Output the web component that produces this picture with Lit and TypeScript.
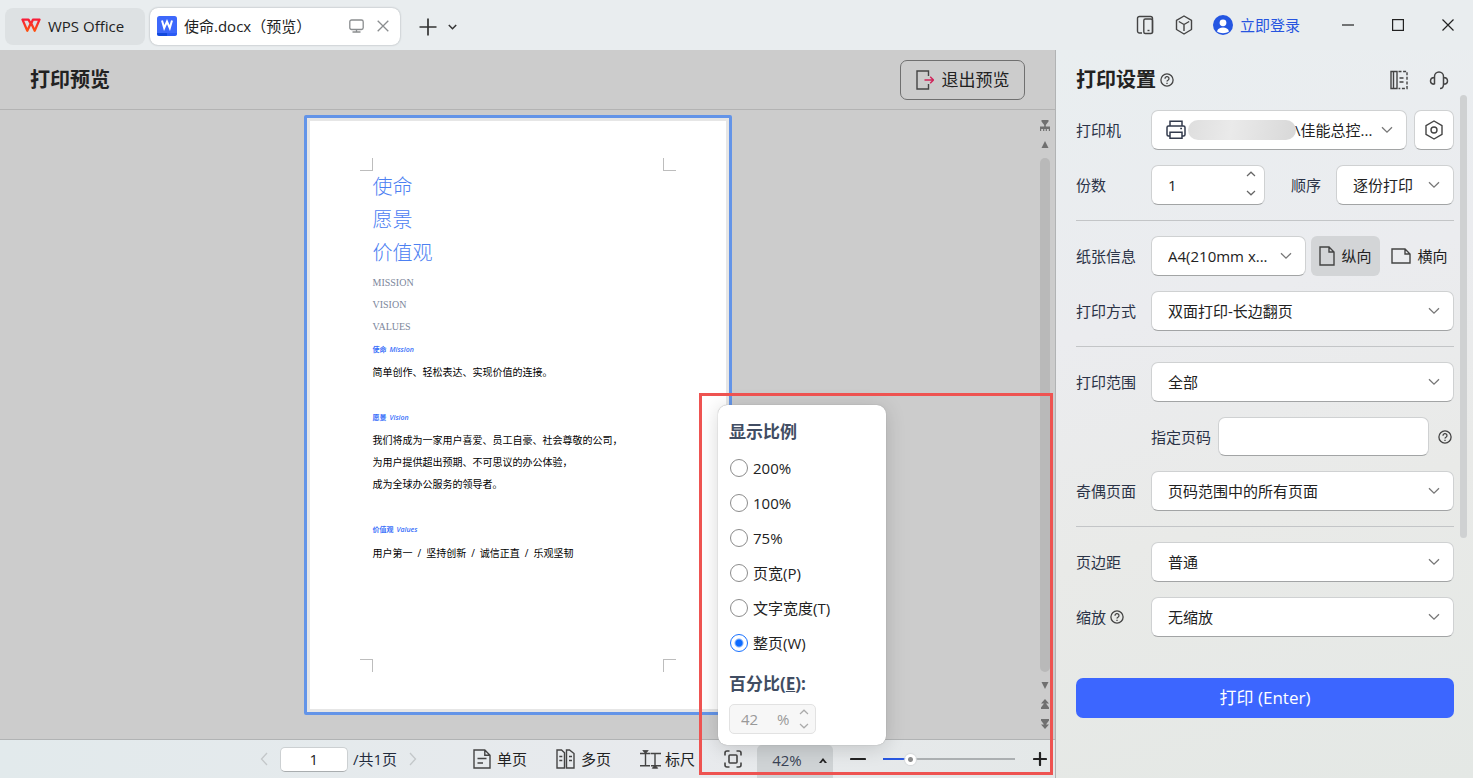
import { LitElement, html, css, svg, nothing } from "lit";
import type { TemplateResult } from "lit";
import { customElement, property, state } from "lit/decorators.js";
import { classMap } from "lit/directives/class-map.js";

const base = css`
  *, *::before, *::after { box-sizing: border-box; }
  :host {
    font-family: "Open Sans", "Noto Sans CJK SC", sans-serif;
    font-size: 15px;
    line-height: 20px;
    color: #222;
  }
  button, input, select { font: inherit; color: inherit; margin: 0; padding: 0; }
  button { border: 0; background: none; display: inline-flex; align-items: center; justify-content: center; white-space: nowrap; }
  h1, h2, p { margin: 0; }
  svg { display: block; flex: none; }
`;

const icon = (w: number, h: number, body: TemplateResult | unknown, color = "#444", width = 1.4) => html`
  <svg width=${w} height=${h} viewBox="0 0 ${w} ${h}" fill="none" stroke=${color} stroke-width=${width} aria-hidden="true">${body}</svg>
`;

const chevronDown = (color = "#777") => icon(12, 8, svg`<path d="M1 1.2 6 6.2 11 1.2"/>`, color, 1.3);
const spinUp = (color: string) => icon(10, 6, svg`<path d="M1 5 5 1.2 9 5"/>`, color, 1.2);
const spinDown = (color: string) => icon(10, 6, svg`<path d="M1 1 5 4.8 9 1"/>`, color, 1.2);
const help = icon(14, 14, svg`
  <circle cx="7" cy="7" r="6.1"/>
  <path d="M5 5.700a2 2 0 1 1 3 1.600c-.7.4-1 .7-1 1.300"/><path d="M7 9.700v1.300"/>`, "#444", 1.3);

/* Drop-down with the shared field look */
@customElement("print-select")
export class PrintSelect extends LitElement {
  static styles = [base, css`
    :host { display: grid; align-items: center; min-width: 0; }
    .field {
      grid-area: 1 / 1; width: 100%; height: 40px; padding: 0 32px 0 16px;
      appearance: none; background: #fff; border: 1px solid #cfd1d2; border-bottom-color: #a2a4a5; border-radius: 7px;
      color: #222; text-overflow: ellipsis;
    }
    .printer { padding: 0 30px 0 143px; }
    .arrow { grid-area: 1 / 1; justify-self: end; margin-right: 14px; pointer-events: none; }
    .lead { grid-area: 1 / 1; display: flex; align-items: center; gap: 2px; margin-left: 15px; pointer-events: none; z-index: 1; }
    .mask { width: 108px; height: 20px; border-radius: 10px; background: linear-gradient(100deg, #dedede, #eaeaea 40%, #e4e4e4 60%, #d8d8d8); }
  `];
  @property() value = "";
  @property() label = "";
  @property({ type: Boolean }) printer = false;

  render() {
    return html`
      <select class=${classMap({ field: true, printer: this.printer })} aria-label=${this.label}>
        <option>${this.value}</option>
      </select>
      ${this.printer ? html`<span class="lead">
        ${icon(20, 20, svg`
          <path d="M4 6V1.2h12V6"/><rect x="1" y="6" width="18" height="10" rx="1.5"/>
          <path d="M4 12.3h12v6H4z" fill="#fff"/><path d="M14.2 8.5h1.8"/>`, "#333b4d", 1.5)}
        <span class="mask"></span></span>` : nothing}
      <span class="arrow">${chevronDown()}</span>
    `;
  }
}

@customElement("title-bar")
export class TitleBar extends LitElement {
  static styles = [base, css`
    :host { display: flex; align-items: center; height: 50px; padding-left: 5px; background: #e9edef; }
    .tab { height: 37px; display: flex; align-items: center; border-radius: 8px; margin-top: 3px; padding-bottom: 2px; }
    .home { width: 140px; padding-left: 16px; gap: 7px; background: #dde1e3; margin-right: 5px; justify-content: flex-start; }
    .doc { width: 250px; padding-left: 7px; padding-right: 11px; gap: 7px; background: #fff; box-shadow: 0 0 2px #9aa0a4; }
    .name { flex: 1; }
    .doc button + button { margin-left: 6px; }
    .add { margin: 3px 0 0 19px; }
    .list { margin: 3px 0 0 11px; }
    .tools { margin-left: auto; display: flex; align-items: center; gap: 20px; }
    .login { display: flex; align-items: center; gap: 7px; color: #2654df; text-decoration: none; margin-left: -1px; }
    .window { display: flex; margin-left: 3px; }
    .window button { width: 50px; height: 40px; }
  `];

  render() {
    return html`
      <button class="tab home">
        <svg width="20" height="15" viewBox="0 0 20 15" aria-hidden="true">
          <defs><linearGradient id="brand" gradientUnits="userSpaceOnUse" x1="0" y1="0" x2="0" y2="15"><stop offset="0" stop-color="#f6183c"/><stop offset="1" stop-color="#ff5a0c"/></linearGradient></defs>
          <path d="M9.800 5.200 6.300 12.800 1.500 1.600h6L9.300 5M10.200 5.200l3.500 7.600 4.800-11.200h-6.600L9.600 7" fill="none" stroke="url(#brand)" stroke-width="2.300" stroke-linejoin="round"/>
        </svg>
        WPS Office
      </button>
      <div class="tab doc">
        <svg width="20" height="20" viewBox="0 0 20 20" aria-hidden="true">
          <rect width="20" height="20" rx="2.500" fill="#3d68fb"/>
          <path d="M0 17h10v3H2.500A2.500 2.500 0 0 1 0 17.500z" fill="#1249dc"/><path d="M10 17h10a3 3 0 0 1-2.500 3H10z" fill="#2a5bf5"/>
          <path d="M5 4.500 7.200 12 10 5.500 12.800 12 15 4.500" fill="none" stroke="#fff" stroke-width="2"/>
        </svg>
        <span class="name">使命.docx（预览）</span>
        <button aria-label="显示">${icon(15, 14, svg`<rect x=".8" y="1" width="13.400" height="9.500" rx="1.800"/><path d="M7.500 10.500v2.500M3.500 13h8"/>`, "#8a8d8f", 1.3)}</button>
        <button aria-label="关闭标签">${icon(12, 12, svg`<path d="m.7.7 10.600 10.600M11.300.7.7 11.300"/>`, "#8a8d8f", 1.3)}</button>
      </div>
      <button class="add" aria-label="新建">${icon(18, 18, svg`<path d="M9 .5v17M.5 9h17"/>`, "#333", 1.7)}</button>
      <button class="list" aria-label="标签列表">${icon(9, 6, svg`<path d="M.8 1 4.500 4.700 8.200 1"/>`, "#333", 1.5)}</button>

      <div class="tools">
        <button aria-label="手机">${icon(18, 20, svg`<path d="M6 18H3.500A2 2 0 0 1 1.500 16V3.500a2 2 0 0 1 2-2h11a2 2 0 0 1 2 2V18"/><rect x="7.800" y="4" width="8.700" height="14.500" rx="1.500"/><path d="M11.500 15.500h2"/>`)}</button>
        <button aria-label="应用">${icon(20, 20, svg`<path d="M10 1 17.500 5.300v9.200L10 19 2.500 14.500V5.300zM4.800 6.500 10 9.500l5.200-3M10 9.500V16" stroke-linejoin="round"/>`)}</button>
        <a class="login" href="#login">
          <svg width="20" height="20" viewBox="0 0 20 20" aria-hidden="true"><circle cx="10" cy="10" r="10" fill="#2456e2"/><circle cx="10" cy="7.800" r="3.400" fill="#fff"/><path d="M4 16.500c.8-3 3-4 6-4s5.200 1 6 4c-3.500 2.300-8.500 2.300-12 0z" fill="#fff"/></svg>
          立即登录
        </a>
        <div class="window">
          <button aria-label="最小化">${icon(12, 12, svg`<path d="M0 6h12"/>`, "#222", 1.2)}</button>
          <button aria-label="最大化">${icon(12, 12, svg`<rect x=".6" y=".6" width="10.800" height="10.800"/>`, "#222", 1.2)}</button>
          <button aria-label="关闭">${icon(12, 12, svg`<path d="m.5.5 11 11M11.500.5.5 11.500"/>`, "#222", 1.2)}</button>
        </div>
      </div>
    `;
  }
}

@customElement("document-page")
export class DocumentPage extends LitElement {
  static styles = [base, css`
    :host {
      display: grid; grid-template: 13px 1fr 13px / 13px 1fr 13px;
      width: 428px; min-height: 600px; padding: 40px 53px; background: #fff;
      border: 3px solid #6394e8; outline: 3px solid #e6e6e6; outline-offset: -6px; border-radius: 2px;
      font-family: "Liberation Serif", "Noto Sans CJK SC", serif; font-size: 10px; line-height: 22px; color: #000;
    }
    .mark { border: 0 solid #bdbdbd; }
    .tl { grid-area: 1 / 1; border-width: 0 1px 1px 0; }
    .tr { grid-area: 1 / 3; border-width: 0 0 1px 1px; }
    .bl { grid-area: 3 / 1; border-width: 1px 1px 0 0; }
    .br { grid-area: 3 / 3; border-width: 1px 0 0 1px; }
    .text { grid-area: 2 / 2; }
    .big { font-size: 20px; line-height: 33px; font-weight: 300; color: #4c80f2; }
    .caps { color: #7c869b; }
    .first { margin-top: 2px; }
    .sub { font-size: 7px; line-height: 23px; font-weight: bold; color: #3a70fa; }
    .latin { font-family: "Open Sans", sans-serif; font-style: italic; font-weight: 600; margin-left: 3px; }
    .blank { height: 22px; }
    .slash { margin: 0 5px; font-family: "Open Sans", sans-serif; }
  `];

  private sub(cn: string, en: string) {
    return html`<p class="sub">${cn}<span class="latin">${en}</span></p>`;
  }

  render() {
    const values = ["用户第一", "坚持创新", "诚信正直", "乐观坚韧"];
    return html`
      <span class="mark tl"></span><span class="mark tr"></span>
      <div class="text">
        ${["使命", "愿景", "价值观"].map((t) => html`<p class="big">${t}</p>`)}
        <p class="caps first">MISSION</p>
        <p class="caps">VISION</p>
        <p class="caps">VALUES</p>
        ${this.sub("使命", "Mission")}
        <p>简单创作、轻松表达、实现价值的连接。</p>
        <div class="blank"></div>
        ${this.sub("愿景", "Vision")}
        <p>我们将成为一家用户喜爱、员工自豪、社会尊敬的公司，</p>
        <p>为用户提供超出预期、不可思议的办公体验，</p>
        <p>成为全球办公服务的领导者。</p>
        <div class="blank"></div>
        ${this.sub("价值观", "Values")}
        <p>${values.map((v, i) => html`${i ? html`<span class="slash">/</span>` : nothing}${v}`)}</p>
      </div>
      <span class="mark bl"></span><span class="mark br"></span>
    `;
  }
}

@customElement("zoom-menu")
export class ZoomMenu extends LitElement {
  static styles = [base, css`
    :host { display: block; width: 168px; padding: 9px 11px 11px; background: #fff; border-radius: 9px; box-shadow: 0 0 1px #888, 0 3px 20px rgba(0, 0, 0, .16); }
    .heading { display: block; font-size: 17px; line-height: 36px; font-weight: bold; color: #414d63; }
    .option { display: flex; align-items: center; gap: 5px; height: 35px; padding-left: 1px; }
    .radio { appearance: none; width: 18px; height: 18px; border: 1px solid #8c8c8c; border-radius: 50%; background: #fff; }
    .radio:checked { border-color: #1670ff; background: radial-gradient(circle, #0d6bff 0 3px, #fff 5px); }
    .percent { margin-top: 6px; }
    .spin { display: flex; align-items: center; width: 87px; height: 30px; margin-top: 2px; padding: 0 6px 0 11px; border: 1px solid #e2e2e2; border-radius: 5px; background: #f7f7f7; color: #999; }
    .value { width: 36px; border: 0; background: none; color: #999; }
    .steps { display: grid; gap: 8px; margin-left: auto; }
  `];
  @state() private selected = "整页(W)";

  render() {
    return html`
      <h2 class="heading">显示比例</h2>
      ${["200%", "100%", "75%", "页宽(P)", "文字宽度(T)", "整页(W)"].map((o) => html`
        <label class="option">
          <input class="radio" type="radio" name="ratio" .checked=${o === this.selected} @change=${() => (this.selected = o)} />${o}
        </label>`)}
      <label class="heading percent" for="percent">百分比(<u>E</u>):</label>
      <div class="spin">
        <input class="value" id="percent" value="42" disabled />%
        <span class="steps">
          <button disabled aria-label="增大">${spinUp("#aaa")}</button>
          <button disabled aria-label="减小">${spinDown("#aaa")}</button>
        </span>
      </div>
    `;
  }
}

@customElement("status-bar")
export class StatusBar extends LitElement {
  static styles = [base, css`
    :host { display: flex; align-items: center; justify-content: flex-end; height: 39px; padding-right: 8px; border-top: 1px solid #b1b3b4; background: linear-gradient(90deg, #e2eaec, #e8eaed 65%, #e4e8e8); }
    .page { width: 68px; height: 25px; margin: 0 5px 0 12px; text-align: center; background: #fff; border: 1px solid #ccd0d2; border-bottom-color: #a9adaf; border-radius: 5px; }
    .total { margin-right: 12px; color: #222b3d; }
    .view { gap: 6px; }
    .single { margin-left: 56px; }
    .multi { margin-left: 29px; }
    .ruler { margin: 0 29px 0 29px; gap: 4px; }
    .anchor { position: relative; align-self: stretch; display: flex; align-items: flex-end; margin: 0 17px 0 15px; }
    .zoom { width: 76px; height: 33px; gap: 17px; background: #cfd3d5; color: #3a4356; border-radius: 5px 5px 0 0; padding: 0 0 3px 9px; }
    .menu { position: absolute; right: -53px; bottom: 33px; z-index: 2; }
    .slider { appearance: none; width: 132px; height: 16px; margin: 0 18px 0 17px; background: linear-gradient(90deg, #2857e0 var(--fill), #abafb1 var(--fill)) center / 100% 2px no-repeat; }
    .slider::-webkit-slider-thumb { appearance: none; width: 11px; height: 11px; border-radius: 50%; background: radial-gradient(circle, #8c8c8c 0 2px, #fff 3px); box-shadow: 0 0 1px 1px #d5d8da; }
  `];
  @state() private level = 18;

  render() {
    return html`
      <button aria-label="上一页">${icon(8, 14, svg`<path d="M7 1 1.500 7 7 13"/>`, "#c3c7c9", 1.3)}</button>
      <input class="page" aria-label="页码" value="1" />
      <span class="total">/共1页</span>
      <button aria-label="下一页">${icon(8, 14, svg`<path d="M1 1 6.500 7 1 13"/>`, "#c3c7c9", 1.3)}</button>
      <button class="view single">${icon(18, 20, svg`<path d="M11.800 1H1v18h16V6.200zM11.800 1v5.200H17M4.500 9.500h9M4.500 14h5.500"/>`)}单页</button>
      <button class="view multi">${icon(19, 20, svg`<path d="M5.500 1H1v18h7.500V3.800zM13.500 1h-3v18H18V4.500zM3.300 7.500h3M3.300 11.500h3M13 7.500h3M13 11.500h3"/>`)}多页</button>
      <button class="view ruler">${icon(21, 20, svg`<path d="M0 4.500h10.500M5.500 4.500v12M0 16.700h10M15 4.500v12M11 4.500h10M11 16.700h10"/><path d="M2.800 1.500h5.400L5.500 4.500zM12.300 19.300h5.400L15 16z" fill="#444" stroke-width=".8"/>`)}标尺</button>
      <button aria-label="适应页面">${icon(18, 18, svg`<path d="M1 5.500V3a2 2 0 0 1 2-2h2.500M12.500 1H15a2 2 0 0 1 2 2v2.500M17 12.500V15a2 2 0 0 1-2 2h-2.500M5.500 17H3a2 2 0 0 1-2-2v-2.500"/><rect x="5" y="5" width="8" height="8" rx="1"/>`, "#444", 1.6)}</button>
      <div class="anchor">
        <button class="zoom" aria-expanded="true">42%<svg width="8" height="5" viewBox="0 0 8 5" aria-hidden="true"><path d="m4 0 4 5H5.800L4 2.800 2.200 5H0z" fill="#222"/></svg></button>
        <zoom-menu class="menu"></zoom-menu>
      </div>
      <button aria-label="缩小">${icon(16, 14, svg`<path d="M1 7h14" stroke-linecap="round"/>`, "#222", 2.2)}</button>
      <input class="slider" type="range" aria-label="缩放比例" min="0" max="100" .value=${String(this.level)}
        style="--fill:${this.level}%" @input=${(e: Event) => (this.level = Number((e.target as HTMLInputElement).value))} />
      <button aria-label="放大">${icon(14, 14, svg`<path d="M1 7h12M7 1v12" stroke-linecap="round"/>`, "#222", 2.2)}</button>
    `;
  }
}

@customElement("preview-area")
export class PreviewArea extends LitElement {
  static styles = [base, css`
    :host { position: relative; display: flex; flex-direction: column; min-width: 0; background: #ccc; border-right: 1px solid #b1b3b4; }
    .header { display: flex; align-items: center; justify-content: space-between; height: 60px; padding: 0 30px; border-bottom: 1px solid #b3b3b3; }
    .title { font-size: 20px; line-height: 28px; font-weight: bold; }
    .exit { width: 125px; height: 40px; gap: 8px; font-size: 17px; border: 1px solid #707070; border-radius: 7px; }
    .canvas { flex: 1; display: grid; grid-template-columns: 1fr 16px; padding-right: 2px; }
    .stage { display: flex; justify-content: center; align-items: flex-start; padding: 5px 2px 24px 0; }
    .scroll { display: flex; flex-direction: column; align-items: center; padding: 10px 0; gap: 10px; }
    .thumb { flex: 1; width: 10px; border-radius: 5px; background: #b9b9b9; }
    .callout { position: absolute; right: 2px; bottom: 3px; width: 354px; height: 382px; border: 3px solid #ee5351; z-index: 3; pointer-events: none; }
  `];

  private glyph(h: number, d: string) {
    return html`<svg width="10" height=${h} viewBox="0 0 10 ${h}" aria-hidden="true"><path d=${d} fill="#707070"/></svg>`;
  }

  render() {
    return html`
      <header class="header">
        <h1 class="title">打印预览</h1>
        <button class="exit">
          ${icon(18, 20, svg`<path d="M12.500 6V1H1v18h11.500v-5"/><path d="M8.500 10h9M14.200 6.700 17.500 10l-3.300 3.300" stroke="#d0245a"/>`)}
          退出预览
        </button>
      </header>
      <div class="canvas">
        <div class="stage"><document-page></document-page></div>
        <div class="scroll">
          ${this.glyph(11, "M1.500 0h7v1.500L5.800 5v1.500H10V11H8.800V9H6.900v2H5.700V9H4.300v2H3.100V9H1.200v2H0V6.500h4.200V5L1.500 1.500z")}
          ${this.glyph(7, "M5 0 8.500 7h-7z")}
          <div class="thumb"></div>
          ${this.glyph(7, "M5 7 1.500 0h7z")}
          ${this.glyph(10, "M5 0 9 4.500H6L9 8.500V10H1V8.500L4 4.500H1z")}
          ${this.glyph(10, "M1 0h8v1.500L6 5.500h3L5 10 1 5.500h3L1 1.500z")}
        </div>
      </div>
      <status-bar></status-bar>
      <div class="callout"></div>
    `;
  }
}

@customElement("print-settings")
export class PrintSettings extends LitElement {
  static styles = [base, css`
    :host { display: flex; gap: 6px; padding: 0 6px 0 20px; background: linear-gradient(165deg, #e9eef0, #ebecef 35%, #e9eae8 62%, #e4e8e5); }
    .form { flex: 1; min-width: 0; display: flex; flex-direction: column; gap: 15px; }
    .header { display: flex; align-items: center; height: 60px; margin-bottom: -15px; }
    .title { font-size: 20px; line-height: 28px; font-weight: bold; margin-right: 4px; }
    .side { margin-left: auto; display: flex; gap: 20px; margin-right: 5px; }
    .row { display: flex; align-items: center; }
    .label { width: 75px; flex: none; display: flex; align-items: center; gap: 4px; color: #2b3347; }
    .grow { flex: 1; }
    .box { background: #fff; border: 1px solid #cfd1d2; border-bottom-color: #a2a4a5; border-radius: 7px; }
    .gear { width: 40px; height: 40px; margin-left: 7px; }
    .copies { display: flex; align-items: center; width: 114px; height: 40px; padding: 0 8px 0 16px; }
    .number { flex: 1; min-width: 0; border: 0; outline: 0; background: none; }
    .steps { display: grid; gap: 13px; padding-bottom: 3px; }
    .order { margin: 0 15px 0 26px; color: #2b3347; }
    .orient { height: 40px; width: 69px; gap: 6px; border-radius: 6px; margin-left: 5px; }
    .on { background: #d3d5d7; }
    .pages { height: 39px; flex: 1; min-width: 0; padding: 0 12px; margin: 0 9px 0 7px; }
    .indent { padding: 0 2px 0 75px; color: #2b3347; }
    .rule { height: 1px; background: #c3c5c7; }
    .print { height: 40px; margin-top: 26px; border-radius: 7px; background: #3c66ff; color: #fff; font-size: 17px; }
    .thumb { width: 7px; height: 443px; margin-top: 45px; border-radius: 4px; background: #cfd1d2; }
  `];

  private selectRow(label: string, value: string, hint = false) {
    return html`<div class="row">
      <span class="label">${label}${hint ? help : nothing}</span>
      <print-select class="grow" label=${label} value=${value}></print-select>
    </div>`;
  }

  render() {
    return html`
      <div class="form">
        <header class="header">
          <h2 class="title">打印设置</h2>${help}
          <span class="side">
            <button aria-label="布局">${icon(20, 20, svg`<path d="M8 1.500H2v17h6zM4.500 1.500v17"/><path d="M9.500 1.500H18v17H9.500" stroke-dasharray="3 1.600"/><path d="M10.500 8h4M10.500 12h4"/>`)}</button>
            <button aria-label="客服">${icon(20, 20, svg`<path d="M5.500 14.200V6.500a4.500 4.500 0 0 1 9 0v7.700M5.500 7.500C3 7.500 1.500 9 1.500 11s1.500 3.200 4 3.200M14.500 7.500c2.500 0 4 1.500 4 3.500s-1.500 3.200-4 3.200c0 2.500-1 4.300-3.500 4.300" stroke-width="1.500"/>`)}</button>
          </span>
        </header>
        <div class="row">
          <span class="label">打印机</span>
          <print-select class="grow" printer label="打印机" value="\\佳能总控..."></print-select>
          <button class="box gear" aria-label="打印机属性">${icon(18, 20, svg`<path d="M9 1 17 5.600v8.800L9 19 1 14.400V5.600z" stroke-linejoin="round"/><circle cx="9" cy="10" r="3"/>`)}</button>
        </div>
        <div class="row">
          <label class="label" for="copies">份数</label>
          <span class="box copies">
            <input class="number" id="copies" value="1" />
            <span class="steps"><button aria-label="增加">${spinUp("#666")}</button><button aria-label="减少">${spinDown("#666")}</button></span>
          </span>
          <span class="order">顺序</span>
          <print-select class="grow" label="顺序" value="逐份打印"></print-select>
        </div>
        <div class="rule"></div>
        <div class="row">
          <span class="label">纸张信息</span>
          <print-select class="grow" label="纸张信息" value="A4(210mm x..."></print-select>
          <button class="orient on" aria-pressed="true">${icon(16, 20, svg`<path d="M10 1H1v18h14V6zM10 1v5h5"/>`)}纵向</button>
          <button class="orient" aria-pressed="false">${icon(20, 16, svg`<path d="M14 1H1v14h18V6zM14 1v5h5"/>`)}横向</button>
        </div>
        ${this.selectRow("打印方式", "双面打印-长边翻页")}
        <div class="rule"></div>
        ${this.selectRow("打印范围", "全部")}
        <div class="row indent">
          <label for="pages">指定页码</label>
          <input class="box pages" id="pages" />${help}
        </div>
        ${this.selectRow("奇偶页面", "页码范围中的所有页面")}
        <div class="rule"></div>
        ${this.selectRow("页边距", "普通")}
        ${this.selectRow("缩放", "无缩放", true)}
        <button class="print">打印 (Enter)</button>
      </div>
      <div class="thumb"></div>
    `;
  }
}

@customElement("app-root")
export class AppRoot extends LitElement {
  static styles = [base, css`
    :host { display: grid; grid-template: auto 1fr / minmax(0, 1fr) 417px; min-height: 100vh; }
    .top { grid-column: 1 / -1; }
  `];

  render() {
    return html`
      <title-bar class="top"></title-bar>
      <preview-area></preview-area>
      <print-settings></print-settings>
    `;
  }
}
